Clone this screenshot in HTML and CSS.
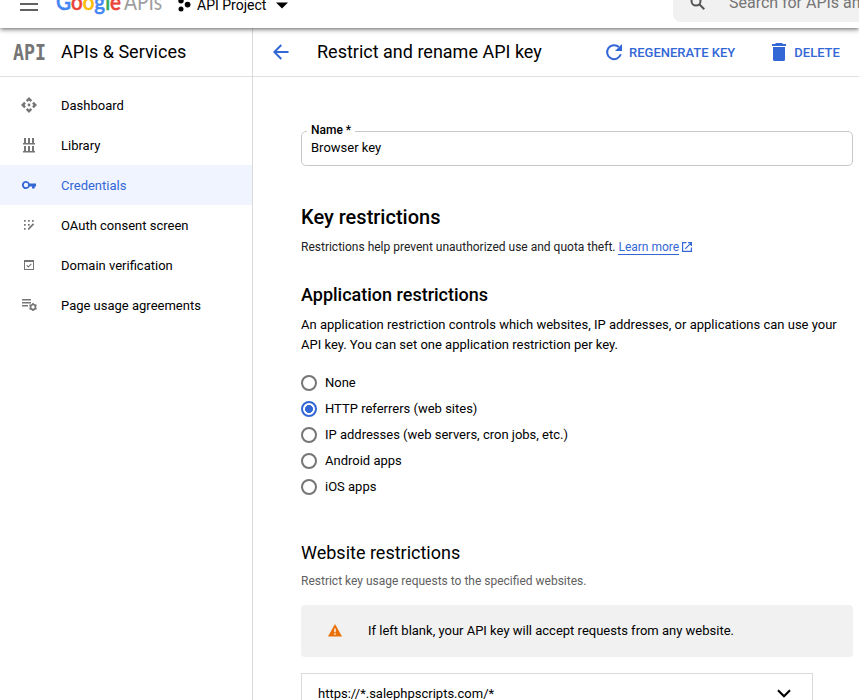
FILE: index.html
```html
<!DOCTYPE html>
<html lang="en">
<head>
<meta charset="utf-8">
<title>Restrict and rename API key</title>
<link rel="stylesheet" href="styles.css">
</head>
<body>
<header class="appbar">
  <div class="menu"><span></span><span></span></div>
  <svg class="logo" width="108" height="36" viewBox="0 0 108 36">
    <text x="0" y="24" class="google" textLength="65" lengthAdjust="spacingAndGlyphs"><tspan class="blue">G</tspan><tspan class="red">o</tspan><tspan class="yellow">o</tspan><tspan class="blue">g</tspan><tspan class="green">l</tspan><tspan class="red">e</tspan></text>
    <text x="68" y="24" class="apis" textLength="38" lengthAdjust="spacingAndGlyphs">APIs</text>
  </svg>
  <button class="project">
    <svg width="14" height="14" viewBox="0 0 14 14"><circle cx="4" cy="2.8" r="2.7"/><circle cx="10.6" cy="6.6" r="2.9"/><circle cx="4" cy="11" r="2.5"/></svg>
    <span>API Project</span>
    <svg class="caret" width="12" height="7" viewBox="0 0 12 7"><path d="M0 .5h12L6 6.500z"/></svg>
  </button>
  <div class="search">
    <svg width="16" height="16" viewBox="0 0 16 16"><circle cx="6" cy="6" r="4.5"/><path d="M9.300 9.300l5 5"/></svg>
    <span>Search for APIs and Services</span>
  </div>
</header>
<div class="layout">
  <aside class="sidebar">
    <div class="product">
      <svg width="33" height="24" viewBox="0 0 33 24"><text x="0" y="20" class="mark" textLength="33" lengthAdjust="spacingAndGlyphs">API</text></svg>
      <span>APIs &amp; Services</span>
    </div>
    <nav>
      <a class="item"><svg width="18" height="18" viewBox="0 0 18 18"><circle cx="9" cy="9" r="1.400"/><path d="M9 1l3.200 3.200-1.700 1.700L9 4.600 7.500 5.900 5.800 4.200zM9 17l3.200-3.200-1.700-1.700L9 13.400l-1.500-1.300-1.700 1.700zM1 9l3.200-3.200 1.700 1.700L4.600 9l1.300 1.500-1.700 1.700zM17 9l-3.200-3.200-1.700 1.700L13.400 9l-1.300 1.500 1.700 1.700z"/></svg><span>Dashboard</span></a>
      <a class="item"><svg width="18" height="18" viewBox="0 0 18 18"><path d="M4 2h2v5h2V2h2v5h2V2h2v5h1v1.500H3V7h1zM4 10h2v5h2v-5h2v5h2v-5h2v5h1v1.500H3V15h1z"/></svg><span>Library</span></a>
      <a class="item active"><svg width="18" height="18" viewBox="0 0 18 18"><path fill-rule="evenodd" d="M9.600 7.500H16v3h-1.300V12.500h-2.700v-2H9.600A4 4 0 1 1 9.600 7.500zM6 6.800a2.200 2.200 0 1 0 0 4.400a2.200 2.200 0 0 0 0-4.400z"/></svg><span>Credentials</span></a>
      <a class="item"><svg width="18" height="18" viewBox="0 0 18 18"><path d="M4 4h1.700v1.700H4zM8 4h1.700v1.700H8zM12 4h1.700v1.700H12zM4 8h1.700v1.700H4zM8 8h1.700v1.700H8zM4 12h1.700v1.700H4zM8 12.200l5-5 1.200 1.200-5.200 5.300H8z"/></svg><span>OAuth consent screen</span></a>
      <a class="item"><svg width="18" height="18" viewBox="0 0 18 18"><path fill-rule="evenodd" d="M4 4h10v10H4zM5 6v7h8V6z"/><path d="M6.700 9.300l1.600 1.600 3-3" fill="none" stroke="#757575" stroke-width="1.100"/></svg><span>Domain verification</span></a>
      <a class="item"><svg width="18" height="18" viewBox="0 0 18 18"><path d="M2 3h9v1.400H2zM2 6h9v1.400H2zM2 9h6v1.400H2z"/><circle cx="13" cy="11" r="2.500" fill="none" stroke="#757575" stroke-width="1.700"/><path d="M12.200 7h1.600v1.600h-1.600zM12.200 13.400h1.600V15h-1.600zM9.100 9.600l.8-1.300 1.400.8-.8 1.300zM16.100 8.300l.8 1.300-1.400.8-.8-1.300zM9.100 12.400l1.400-.8.8 1.300-1.400.8zM14.700 12.900l.8-1.300 1.400.8-.8 1.300z"/></svg><span>Page usage agreements</span></a>
    </nav>
  </aside>
  <main class="main">
    <div class="toolbar">
      <svg class="back" width="16" height="16" viewBox="0 0 16 16"><path d="M15.500 8H1.500M8.300 1L1.300 8l7 7"/></svg>
      <h1>Restrict and rename API key</h1>
      <button class="action"><svg width="18" height="18" viewBox="0 0 18 18"><path d="M13.900 4A7 7 0 1 0 15.800 11.300" fill="none" stroke="#3367d6" stroke-width="2"/><path d="M17 1v7h-7z"/></svg><span>REGENERATE KEY</span></button>
      <button class="action delete"><svg width="14" height="18" viewBox="0 0 14 18"><path d="M4 0h6l1 1h3v2H0V1h3zM1 4h12v12.500a1.500 1.500 0 0 1-1.500 1.500h-9A1.500 1.500 0 0 1 1 16.500z"/></svg><span>DELETE</span></button>
    </div>
    <div class="content">
      <fieldset class="field"><legend>Name *</legend><div>Browser key</div></fieldset>
      <h2>Key restrictions</h2>
      <p class="small">Restrictions help prevent unauthorized use and quota theft. <a class="link">Learn more</a><svg class="ext" width="10" height="10" viewBox="0 0 10 10"><path d="M4.500.6H.6v8.800h8.800V5.500M6 .6h3.400V4M9.200.8L3.200 6.800"/></svg></p>
      <h3>Application restrictions</h3>
      <p class="desc">An application restriction controls which websites, IP addresses, or applications can use your API key. You can set one application restriction per key.</p>
      <div class="radios">
        <label><i></i>None</label>
        <label><i class="on"></i>HTTP referrers (web sites)</label>
        <label><i></i>IP addresses (web servers, cron jobs, etc.)</label>
        <label><i></i>Android apps</label>
        <label><i></i>iOS apps</label>
      </div>
      <h3 class="regular">Website restrictions</h3>
      <p class="small muted">Restrict key usage requests to the specified websites.</p>
      <div class="notice"><svg width="14" height="13" viewBox="0 0 14 13"><path d="M7 0l7 12.500H0z" fill="#e8710a"/><path d="M6.300 4.500h1.400v3.700H6.300zM6.300 9.300h1.400v1.400H6.300z" fill="#fff"/></svg><span>If left blank, your API key will accept requests from any website.</span></div>
      <div class="entry"><span>https://*.salephpscripts.com/*</span><svg width="14" height="9" viewBox="0 0 14 9"><path d="M1 1.300l6 6 6-6"/></svg></div>
    </div>
  </main>
</div>
</body>
</html>
```
FILE: styles.css
```css
* { box-sizing: border-box; }
body {
  margin: 0;
  height: 700px;
  overflow: hidden;
  display: flex;
  flex-direction: column;
  background: #fff;
  color: #000;
  font: 13px/20px Roboto, sans-serif;
}
h1, h2, h3, p { margin: 0; }
svg { display: block; flex: none; }
button { border: 0; padding: 0; background: none; font: inherit; color: inherit; display: flex; align-items: center; }

.appbar {
  position: relative;
  z-index: 2;
  flex: none;
  height: 28px;
  padding-left: 20px;
  display: flex;
  align-items: flex-start;
  background: #fff;
  box-shadow: 0 1px 5px rgba(0, 0, 0, .65);
}
.menu { width: 18px; padding-top: 3px; display: grid; gap: 4px; }
.menu span { height: 2px; background: #616161; }
.logo { margin: -14px 0 0 18px; }
.google { font: 500 23px Lato, sans-serif; stroke-width: .6px; }
.blue { fill: #4285f4; stroke: #4285f4; }
.red { fill: #ea4335; stroke: #ea4335; }
.yellow { fill: #fbbc05; stroke: #fbbc05; }
.green { fill: #34a853; stroke: #34a853; }
.apis { font: 23px Lato, sans-serif; fill: #9e9e9e; }
.project { margin: -5px 0 0 13px; height: 20px; font-size: 14px; }
.project span { width: 70px; margin-left: 6px; text-align: left; white-space: nowrap; }
.project .caret { margin-left: 9px; }
.search {
  height: 42px;
  width: 186px;
  margin: -20px 0 0 auto;
  padding: 13px 0 0 17px;
  display: flex;
  gap: 23px;
  overflow: hidden;
  white-space: nowrap;
  background: #f1f1f1;
  border-radius: 8px 0 0 8px;
  color: #757575;
  font-size: 16px;
}
.search span { letter-spacing: -.02px; }
.search svg { margin-top: 2px; fill: none; stroke: #555; stroke-width: 2; }

.layout { flex: 1; min-height: 0; display: flex; }
.sidebar { width: 253px; flex: none; border-right: 1px solid #dadada; }
.product {
  height: 49px;
  padding-left: 13px;
  display: flex;
  align-items: center;
  gap: 15px;
  border-bottom: 1px solid #e0e0e0;
  font-size: 18px;
}
.mark { font: bold 22px "DejaVu Sans Mono", monospace; fill: #757575; }
.sidebar nav { padding-top: 8px; }
.item { height: 40px; padding-left: 20px; display: flex; align-items: center; gap: 23px; }
.item span { padding-top: 2px; }
.item svg { fill: #757575; }
.active { background: #f0f4ff; color: #3367d6; }
.active svg { fill: #3367d6; }

.main { flex: 1; min-width: 0; }
.toolbar { height: 49px; padding-left: 20px; display: flex; align-items: center; border-bottom: 1px solid #e0e0e0; white-space: nowrap; }
.back { fill: none; stroke: #3367d6; stroke-width: 2; }
h1 { width: 288px; margin-left: 28px; font-size: 18px; font-weight: 400; }
.action { color: #3367d6; font-weight: 500; gap: 6px; }
.action span { padding-top: 2px; }
.action svg { fill: #3367d6; }
.delete { margin-left: 37px; gap: 8px; }

.content { width: 600px; padding: 46px 0 0 48px; }
.field { height: 43px; width: 552px; margin: 0; padding: 0 9px; border: 1px solid #c8c8c8; border-radius: 5px; }
.field legend { height: 16px; margin-left: -4px; padding: 0 4px; font-size: 12px; font-weight: 500; line-height: 14px; }
.field div { margin-top: -1px; line-height: 20px; }
h2 { margin-top: 39px; font-size: 20px; font-weight: 500; line-height: 24px; }
.small { margin-top: 8px; display: flex; font-size: 12px; line-height: 20px; color: #212121; white-space: pre; }
.link { height: 18px; color: #3367d6; border-bottom: 1px solid #3367d6; }
.ext { margin: 5px 0 0 3px; fill: none; stroke: #3367d6; stroke-width: 1.2; }
h3 { margin-top: 26px; font-size: 18px; font-weight: 500; line-height: 24px; }
.desc { margin-top: 8px; }
.radios { margin-top: 15px; }
.radios label { height: 26px; display: flex; align-items: center; gap: 8px; }
.radios i { width: 16px; height: 16px; border: 2px solid #757575; border-radius: 50%; }
.radios .on { border-color: #3367d6; background: radial-gradient(circle, #3367d6 3.7px, transparent 4.3px); }
.regular { margin-top: 41px; font-weight: 400; }
.muted { margin-top: 6px; color: #616161; }
.notice { width: 552px; height: 52px; margin-top: 14px; padding-left: 27px; display: flex; align-items: center; gap: 26px; background: #f1f1f1; border-radius: 4px; }
.notice svg { margin-top: -1px; }
.entry { width: 512px; height: 42px; margin-top: 16px; padding: 0 21px 0 16px; display: flex; align-items: center; justify-content: space-between; border: 1px solid #dadada; }
.entry svg { margin-top: -2px; fill: none; stroke: #000; stroke-width: 2.2; }
```
